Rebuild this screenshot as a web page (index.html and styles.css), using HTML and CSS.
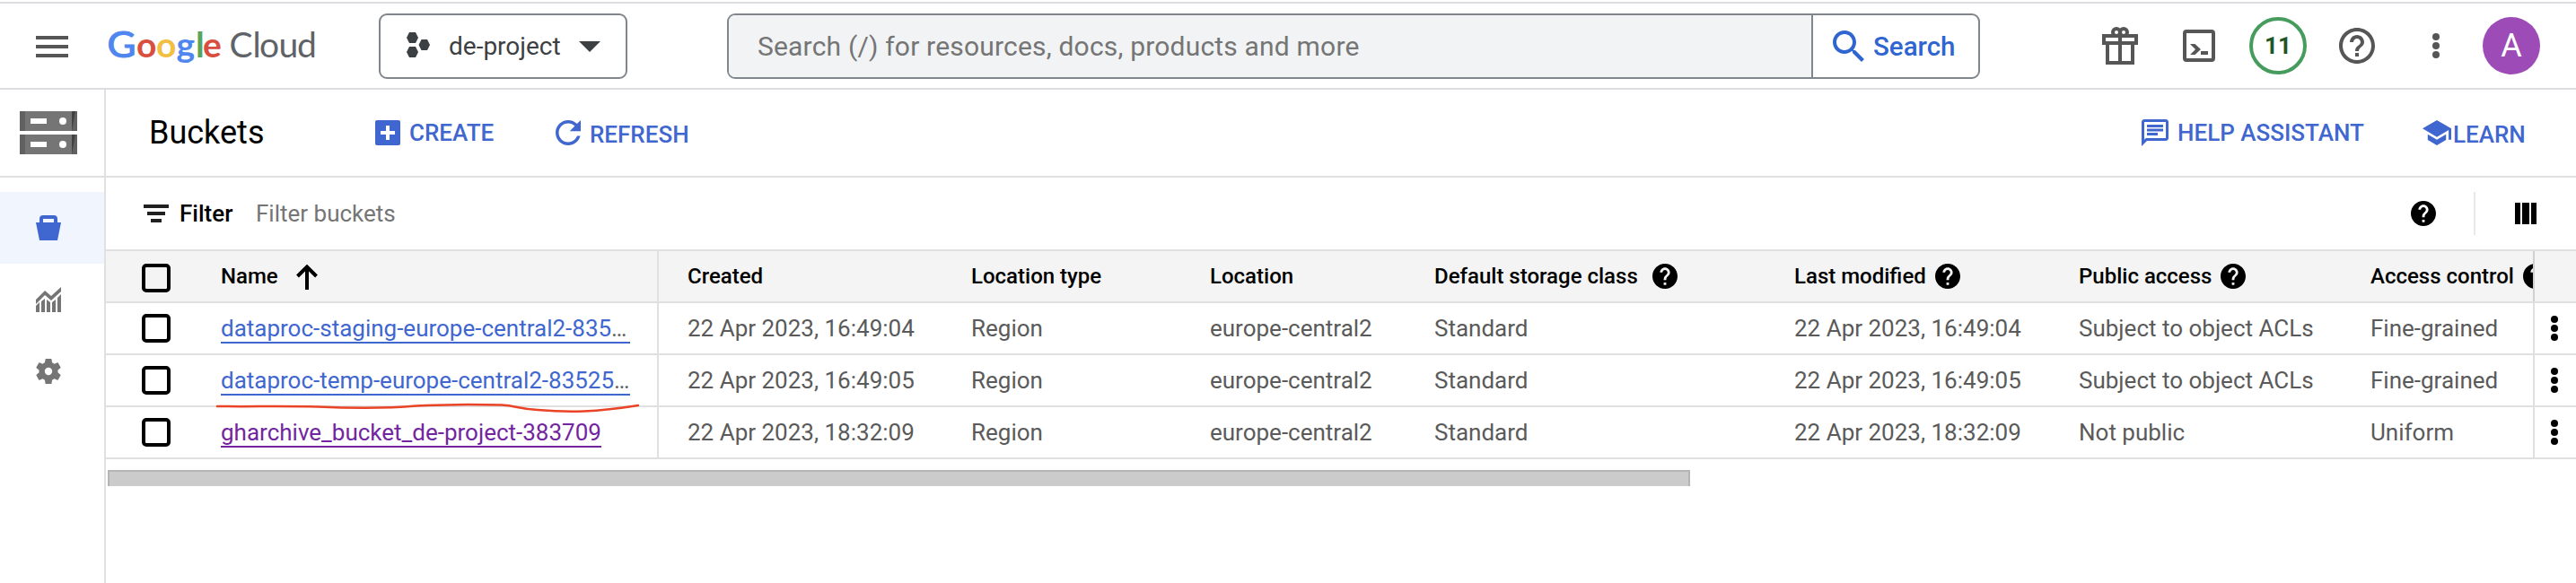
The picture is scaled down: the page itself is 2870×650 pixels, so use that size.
FILE: index.html
```html
<!DOCTYPE html>
<html lang="en">
<head>
<meta charset="utf-8">
<title>Buckets – Cloud Storage</title>
<link rel="stylesheet" href="styles.css">
</head>
<body>
<svg class="defs" width="0" height="0">
  <symbol id="help-filled" viewBox="2 2 20 20"><path d="M12 2C6.48 2 2 6.48 2 12s4.48 10 10 10 10-4.48 10-10S17.52 2 12 2zm1 17h-2v-2h2v2zm2.07-7.75l-.9.92C13.45 12.9 13 13.5 13 15h-2v-.5c0-1.1.45-2.1 1.17-2.83l1.24-1.26c.37-.36.59-.86.59-1.41 0-1.1-.9-2-2-2s-2 .9-2 2H8c0-2.21 1.79-4 4-4s4 1.79 4 4c0 .88-.36 1.68-.93 2.25z"/></symbol>
  <symbol id="dots" viewBox="0 0 8 28"><circle cx="4" cy="4" r="4"/><circle cx="4" cy="14" r="4"/><circle cx="4" cy="24" r="4"/></symbol>
</svg>
<header class="topbar">
  <svg class="menu" width="36" height="24" viewBox="0 0 36 24"><path d="M0 0h36v4H0zM0 10h36v4H0zM0 20h36v4H0z"/></svg>
  <svg class="logo" width="236" height="56" viewBox="0 0 236 56">
    <g class="logo-google">
      <text x="-0.5" y="42" class="logo-g" fill="#4f86ef" textLength="32" lengthAdjust="spacingAndGlyphs">G</text>
      <text x="32" y="42" fill="#d94f3f">o</text>
      <text x="54" y="42" fill="#f2bf42">o</text>
      <text x="76.5" y="42" fill="#4f86ef">g</text>
      <text x="98" y="42" fill="#58a55c">l</text>
      <text x="106" y="42" fill="#d94f3f">e</text>
    </g>
    <g class="logo-cloud">
      <text x="135.5" y="42">C</text><text x="161.5" y="42">l</text><text x="169" y="42">o</text><text x="190.5" y="42">u</text><text x="211" y="42">d</text>
    </g>
  </svg>
  <div class="project">
    <svg width="26" height="28" viewBox="0 0 26 28"><path d="M3 0h7l3 6-3 6H3L0 6zM3 16h7l3 6-3 6H3l-3-6zM16.500 8h6.500l3 6-3 6h-6.500l-3-6z"/></svg>
    <span class="project-name">de-project</span>
    <svg width="24" height="12" viewBox="0 0 24 12"><path d="M0 0h24L12 12z"/></svg>
  </div>
  <div class="search">
    <div class="search-input">Search (/) for resources, docs, products and more</div>
    <div class="search-button">
      <svg width="35" height="35" viewBox="3 3 17.500 17.500"><path d="M15.500 14h-.79l-.28-.27C15.410 12.590 16 11.110 16 9.500 16 5.910 13.090 3 9.500 3S3 5.910 3 9.500 5.910 16 9.500 16c1.610 0 3.090-.59 4.230-1.570l.27.28v.79l5 4.990L20.490 19l-4.990-5zm-6 0C7.010 14 5 11.990 5 9.500S7.010 5 9.500 5 14 7.010 14 9.500 11.990 14 9.500 14z"/></svg>
      <span>Search</span>
    </div>
  </div>
  <div class="tools">
    <svg class="gift" width="40" height="42" viewBox="0 0 40 42"><g fill="none" stroke="#565656" stroke-width="4"><path d="M2 10h36v8H2zM6 18h28v22H6zM20 8v32"/><circle cx="16" cy="6" r="4"/><circle cx="24" cy="6" r="4"/></g></svg>
    <svg class="shell" width="36" height="36" viewBox="0 0 36 36"><rect x="2" y="2" width="32" height="32" rx="2" fill="none" stroke="#565656" stroke-width="4"/><path d="M8 16h5.500l6.500 6-6.500 6H8l6-6zM20 24h8v4h-8z"/></svg>
    <div class="badge">11</div>
    <svg class="help" width="40" height="40" viewBox="2 2 20 20"><path d="M11 18h2v-2h-2v2zm1-16C6.480 2 2 6.480 2 12s4.480 10 10 10 10-4.480 10-10S17.520 2 12 2zm0 18c-4.410 0-8-3.590-8-8s3.590-8 8-8 8 3.590 8 8-3.590 8-8 8zm0-14c-2.210 0-4 1.790-4 4h2c0-1.100.9-2 2-2s2 .9 2 2c0 2-3 1.750-3 5h2c0-2.250 3-2.500 3-5 0-2.210-1.790-4-4-4z"/></svg>
    <svg class="more" width="8" height="28"><use href="#dots"/></svg>
    <div class="avatar">A</div>
  </div>
</header>
<div class="shell-body">
  <nav class="side">
    <div class="product">
      <svg width="64" height="48" viewBox="0 0 64 48"><g id="server"><path fill="#757575" d="M0 0h64v22H0z"/><path fill="#616161" d="M0 0h6v22H0zM58 0h6v22h-6z"/><path fill="#424242" d="M58 0h4l-4 22z"/><path fill="#fff" d="M12 8h18v6H12z"/><circle cx="48" cy="11" r="4" fill="#fff"/></g><use href="#server" y="26"/></svg>
    </div>
    <div class="side-item active"><svg width="28" height="28" viewBox="0 0 28 28"><path fill-rule="evenodd" d="M4 8V4q0-4 4-4h12q4 0 4 4v4h4l-4 20H4L0 8zM8 4v4h12V4z"/></svg></div>
    <div class="side-item"><svg width="28" height="28" viewBox="0 0 28 28"><path d="M0 14L10 4l7 6L28 0v5L17 15l-7-6L0 19zM0 21l4-4v11H0zM6 16l4-3v15H6zM12 14l4 3v11h-4zM18 17l4-3v14h-4zM24 12l4-4v20h-4z"/></svg></div>
    <div class="side-item"><svg width="28" height="28" viewBox="2 2 20 20"><path d="M19.430 12.980c.04-.32.070-.64.070-.98s-.03-.66-.07-.98l2.110-1.650c.19-.15.240-.42.120-.64l-2-3.460c-.12-.22-.39-.3-.61-.22l-2.490 1c-.52-.4-1.080-.73-1.690-.98l-.38-2.650C14.460 2.180 14.250 2 14 2h-4c-.25 0-.46.180-.49.420l-.38 2.650c-.61.250-1.170.590-1.690.980l-2.490-1c-.23-.09-.49 0-.61.220l-2 3.460c-.13.220-.07.490.120.640l2.110 1.650c-.04.320-.07.650-.07.980s.03.660.070.980l-2.110 1.650c-.19.150-.24.420-.12.640l2 3.460c.12.220.39.300.61.220l2.490-1c.52.400 1.080.730 1.690.980l.38 2.650c.03.240.240.420.490.420h4c.25 0 .46-.18.490-.42l.38-2.650c.61-.25 1.170-.59 1.690-.98l2.490 1c.23.090.49 0 .61-.22l2-3.460c.12-.22.070-.49-.12-.64l-2.110-1.650zM12 15a3 3 0 1 1 0-6 3 3 0 0 1 0 6z"/></svg></div>
  </nav>
  <main class="main">
    <div class="actions">
      <h1>Buckets</h1>
      <div class="action create"><svg width="28" height="28" viewBox="0 0 28 28"><path fill-rule="evenodd" d="M2 0h24q2 0 2 2v24q0 2-2 2H2q-2 0-2-2V2q0-2 2-2zM12 6v6H6v4h6v6h4v-6h6v-4h-6V6z"/></svg><span>CREATE</span></div>
      <div class="action refresh"><svg width="28" height="28" viewBox="4 4 16 16"><path d="M17.650 6.350C16.200 4.900 14.210 4 12 4c-4.420 0-7.990 3.580-7.990 8s3.570 8 7.990 8c3.730 0 6.840-2.550 7.730-6h-2.080c-.82 2.330-3.040 4-5.650 4-3.310 0-6-2.690-6-6s2.690-6 6-6c1.660 0 3.140.69 4.220 1.780L13 11h7V4l-2.350 2.350z"/></svg><span>REFRESH</span></div>
      <div class="action assist"><svg width="30" height="30" viewBox="2 2 20 20"><path d="M4 4h16v12H5.170L4 17.170V4m0-2c-1.100 0-1.990.9-1.990 2L2 22l4-4h14c1.100 0 2-.9 2-2V4c0-1.100-.9-2-2-2H4zm2 10h8v2H6v-2zm0-3h12v2H6V9zm0-3h12v2H6V6z"/></svg><span>HELP ASSISTANT</span></div>
      <div class="action learn"><svg width="32" height="28" viewBox="1 3 22 18" preserveAspectRatio="none"><path d="M5 13.180v4L12 21l7-3.820v-4L12 17l-7-3.820zM12 3L1 9l11 6 9-4.910V17h2V9L12 3z"/></svg><span>LEARN</span></div>
    </div>
    <div class="filter">
      <svg width="28" height="20" viewBox="0 0 28 20"><path d="M0 0h28v4H0zM4 8h20v4H4zM8 16h12v4H8z"/></svg>
      <span class="filter-label">Filter</span>
      <span class="filter-hint">Filter buckets</span>
      <svg class="filter-help" width="28" height="28"><use href="#help-filled"/></svg>
      <i class="filter-sep"></i>
      <svg width="24" height="24" viewBox="0 0 24 24"><path d="M0 0h6v24H0zM8 0h8v24H8zM18 0h6v24h-6z"/></svg>
    </div>
    <div class="table">
      <div class="row head">
        <div class="check"><i class="box"></i></div>
        <div class="name">Name<svg class="sort" width="24" height="28" viewBox="0 0 24 28"><path d="M12 3v25M1.500 13L12 2.500 22.500 13" fill="none" stroke="#000" stroke-width="4"/></svg></div>
        <div>Created</div><div>Location type</div><div>Location</div>
        <div>Default storage class<svg class="tip wide" width="28" height="28"><use href="#help-filled"/></svg></div>
        <div>Last modified<svg class="tip" width="28" height="28"><use href="#help-filled"/></svg></div>
        <div>Public access<svg class="tip" width="28" height="28"><use href="#help-filled"/></svg></div>
        <div class="control">Access control<svg class="tip" width="28" height="28"><use href="#help-filled"/></svg></div>
        <div class="menu-cell"></div>
      </div>
      <div class="row">
        <div class="check"><i class="box"></i></div>
        <div class="name"><a class="link full">dataproc-staging-europe-central2-835<span>…</span></a></div>
        <div>22 Apr 2023, 16:49:04</div><div>Region</div><div>europe-central2</div><div>Standard</div><div>22 Apr 2023, 16:49:04</div><div>Subject to object ACLs</div><div class="control">Fine-grained</div>
        <div class="menu-cell"><svg width="8" height="28"><use href="#dots"/></svg></div>
      </div>
      <div class="row">
        <div class="check"><i class="box"></i></div>
        <div class="name"><a class="link full">dataproc-temp-europe-central2-83525<span>…</span></a></div>
        <div>22 Apr 2023, 16:49:05</div><div>Region</div><div>europe-central2</div><div>Standard</div><div>22 Apr 2023, 16:49:05</div><div>Subject to object ACLs</div><div class="control">Fine-grained</div>
        <div class="menu-cell"><svg width="8" height="28"><use href="#dots"/></svg></div>
      </div>
      <div class="row">
        <div class="check"><i class="box"></i></div>
        <div class="name"><a class="link visited">gharchive_bucket_de-project-383709</a></div>
        <div>22 Apr 2023, 18:32:09</div><div>Region</div><div>europe-central2</div><div>Standard</div><div>22 Apr 2023, 18:32:09</div><div>Not public</div><div class="control">Uniform</div>
        <div class="menu-cell"><svg width="8" height="28"><use href="#dots"/></svg></div>
      </div>
      <svg class="mark" width="476" height="14" viewBox="0 0 476 14"><path d="M3 5C40 5.500 75 4.500 115 5.500C150 7 190 7.500 225 4.500C260 2.500 295 3 320 3.500C336 4.500 340 8 360 9C395 12 425 11.500 472 4"/></svg>
    </div>
    <div class="scrollbar"></div>
  </main>
</div>
</body>
</html>
```
FILE: styles.css
```css
* { box-sizing: border-box; }
body { margin: 0; width: 2870px; height: 650px; overflow: hidden; background: #fff; font-family: Roboto, sans-serif; font-size: 26px; line-height: 30px; color: #000; }
svg { display: block; flex: none; }
.defs { position: absolute; }

.topbar { display: flex; align-items: center; height: 100px; padding: 2px 0 0 40px; border-bottom: 2px solid #dadce0; background: linear-gradient(#dadce0, #dadce0) 0 2px / 100% 2px no-repeat; }
.menu { fill: #565656; margin-top: 3px; }
.logo { margin-left: 44px; }
.logo text { font-family: Lato, sans-serif; font-size: 39px; }
.logo-google text { font-weight: 700; }
.logo-google .logo-g { font-size: 41px; font-weight: 400; stroke: #4f86ef; stroke-width: 1.2px; }
.logo-cloud text { font-weight: 400; fill: #5f6368; }
.project { display: flex; align-items: center; width: 277px; height: 73px; margin: 3px 0 0 66px; padding-left: 29px; border: 2px solid #80868b; border-radius: 9px; fill: #3c4043; color: #3c4043; font-size: 28px; }
.project svg:first-child { margin-top: -4px; }
.project-name { width: 145px; margin-left: 21px; }
.search { display: flex; width: 1396px; height: 73px; margin: 3px 0 0 111px; border: 2px solid #80868b; border-radius: 9px; overflow: hidden; }
.search-input { display: flex; align-items: center; width: 1208px; padding-left: 32px; background: #f1f3f4; color: #757575; font-size: 30px; letter-spacing: .19px; border-right: 2px solid #80868b; }
.search-button { display: flex; align-items: center; gap: 10px; padding-left: 22px; color: #2f65d0; fill: #2f65d0; font-size: 29.500px; font-weight: 500; }
.tools { display: flex; align-items: center; margin: 2px 0 0 136px; fill: #565656; }
.gift { margin-top: -1px; }
.shell { margin-left: 50px; }
.badge { display: flex; align-items: center; justify-content: center; width: 64px; height: 64px; margin-left: 38px; border: 4px solid #469c5d; border-radius: 50%; color: #1e5629; font-size: 26px; font-weight: 700; }
.help { margin-left: 36px; }
.more { margin-left: 64px; }
.avatar { display: flex; align-items: center; justify-content: center; width: 64px; height: 64px; margin-left: 48px; border-radius: 50%; background: #9d4bb6; color: #fff; font-size: 36px; }

.shell-body { display: flex; height: 550px; }
.side { width: 118px; border-right: 2px solid #e0e0e0; }
.product { height: 98px; margin-bottom: 16px; padding: 24px 0 0 22px; border-bottom: 2px solid #e0e0e0; }
.side-item { height: 80px; padding: 26px 0 0 40px; fill: #757575; }
.active { background: #f0f5fe; fill: #4066cf; }
.main { width: 2752px; }

.actions { display: flex; height: 98px; padding-left: 48px; border-bottom: 2px solid #e0e0e0; }
h1 { width: 252px; margin: 27px 0 0; font-size: 36px; line-height: 42px; font-weight: 400; }
.action { display: flex; color: #4066cf; fill: #4066cf; font-weight: 500; white-space: nowrap; }
.action span { margin-top: 33px; }
.create { width: 201px; }
.create svg, .refresh svg { margin: 34px 10px 0 0; }
.refresh { width: 400px; }
.refresh span, .learn span { margin-top: 35px; }
.assist { margin-left: auto; width: 313px; }
.assist svg { margin: 33px 10px 0 0; }
.learn { width: 171px; }
.learn svg { margin: 34px 2px 0 0; }

.filter { display: flex; align-items: center; height: 80px; padding: 0 44px 0 42px; }
.filter svg:first-child { fill: #212121; margin-right: 12px; }
.filter-label { width: 85px; font-weight: 500; }
.filter-hint { color: #757575; }
.filter-help { margin-left: auto; }
.filter-sep { width: 2px; height: 48px; margin: 0 44px 0 42px; background: #e8e8e8; }

.table { position: relative; border-top: 2px solid #e0e0e0; }
.row { display: grid; grid-template-columns: 128px 520px 316px 266px 250px 401px 317px 325px 181px 48px; height: 58px; border-bottom: 2px solid #e0e0e0; color: #5a5a5a; white-space: nowrap; }
.row > div { display: flex; align-items: center; }
.head { background: #f4f4f4; color: #000; font-size: 24px; font-weight: 500; }
.row .check { padding-left: 40px; }
.box { width: 32px; height: 32px; border: 4px solid #000; border-radius: 5px; }
.head .box { margin-top: 4px; }
.row .name { width: 488px; border-right: 2px solid #e0e0e0; }
.sort { margin: 2px 0 0 20px; }
.tip { margin-left: 10px; }
.wide { margin-left: 16px; }
.row .control { overflow: hidden; }
.row .menu-cell { padding-left: 18px; border-left: 2px solid #e0e0e0; }
.head .menu-cell { border-left-color: #d0d0d0; }
.link { display: block; height: 32px; margin-top: 2px; border-bottom: 2px solid #4066cf; color: #4066cf; }
.link span { color: #5a5a5a; }
.full { width: 456px; }
.visited { color: #7325a0; border-color: #7325a0; }
.mark { position: absolute; left: 121px; top: 168px; fill: none; stroke: #e94425; stroke-width: 2.5; stroke-linecap: round; }
.scrollbar { width: 1763px; height: 18px; margin: 12px 0 0 2px; background: #cbcbcb; border: solid #b5b5b5; border-width: 2px 2px 0; }
```
